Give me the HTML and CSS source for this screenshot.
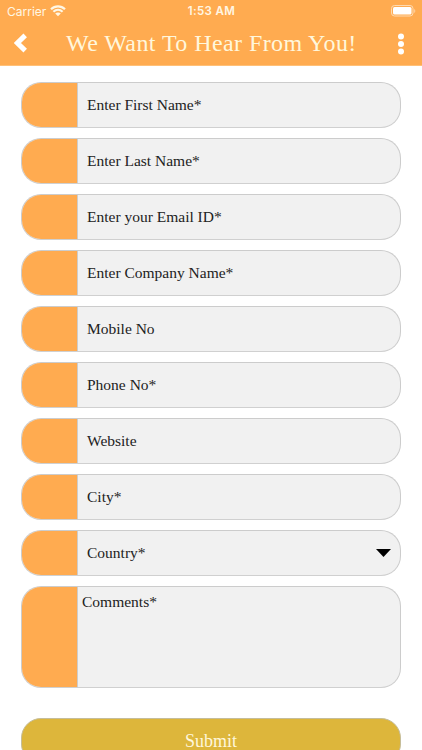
FILE: index.html
```
<!DOCTYPE html>
<html lang="en">
<head>
    <meta charset="UTF-8">
    <meta name="viewport" content="width=device-width, initial-scale=1.0">
    <title>We Want To Hear From You!</title>
    <link rel="stylesheet" href="styles.css">
</head>
<body>

    <header class="header">
        <div class="status-bar">
            <div class="carrier">
                <span>Carrier</span>
                <svg class="wifi" viewBox="0 0 16 12" width="16" height="12">
                    <path d="M1 4.200C5 .3 11 .3 15 4.200M3.400 6.800c2.700-2.500 6.500-2.500 9.200 0" fill="none" stroke="#fff7e4" stroke-width="2.200"/>
                    <path d="M5.200 8.500c1.600-1.400 4-1.400 5.600 0L8 11.300z" fill="#fff7e4"/>
                </svg>
            </div>
            <div class="time">1:53 AM</div>
            <svg class="battery" viewBox="0 0 25 12" width="25" height="12">
                <rect x=".5" y=".5" width="21.500" height="10.500" rx="3" fill="none" stroke="#ffdab0"/>
                <rect x="2" y="2" width="18.500" height="7.500" rx="1.500" fill="#fff"/>
                <path d="M23.300 4v4c1.300-.5 1.300-3.500 0-4z" fill="#ffdab0"/>
            </svg>
        </div>
        <div class="nav-bar">
            <svg class="back" viewBox="0 0 14 20" width="14" height="20">
                <path d="M11.200 2.400L3.400 10l7.800 7.600" fill="none" stroke="#fff" stroke-width="5"/>
            </svg>
            <h1 class="title">We Want To Hear From You!</h1>
            <svg class="more" viewBox="0 0 6 22" width="6" height="22">
                <circle cx="3" cy="3.500" r="3" fill="#fff"/>
                <circle cx="3" cy="11" r="3" fill="#fff"/>
                <circle cx="3" cy="18.500" r="3" fill="#fff"/>
            </svg>
        </div>
    </header>

    <main class="form">
        <div class="field"><div class="icon-box"></div><span class="label">Enter First Name*</span></div>
        <div class="field"><div class="icon-box"></div><span class="label">Enter Last Name*</span></div>
        <div class="field"><div class="icon-box"></div><span class="label">Enter your Email ID*</span></div>
        <div class="field"><div class="icon-box"></div><span class="label">Enter Company Name*</span></div>
        <div class="field"><div class="icon-box"></div><span class="label">Mobile No</span></div>
        <div class="field"><div class="icon-box"></div><span class="label">Phone No*</span></div>
        <div class="field"><div class="icon-box"></div><span class="label">Website</span></div>
        <div class="field"><div class="icon-box"></div><span class="label">City*</span></div>
        <div class="field">
            <div class="icon-box"></div>
            <span class="label">Country*</span>
            <svg class="arrow" viewBox="0 0 15 8" width="15" height="8">
                <path d="M0 0h15L7.500 8z" fill="#000"/>
            </svg>
        </div>
        <div class="field comments"><div class="icon-box"></div><span class="label">Comments*</span></div>
        <button class="submit">Submit</button>
    </main>

</body>
</html>
```
FILE: styles.css
```
* {
    box-sizing: border-box;
}
body {
    margin: 0;
    height: 750px;
    overflow: hidden;
    background: #fff;
    font-family: Georgia, "Liberation Serif", serif;
}
.header {
    height: 66px;
    background: #ffab50;
    border-bottom: 1px solid #ffc078;
}
.status-bar {
    display: grid;
    grid-template-columns: 1fr auto 1fr;
    align-items: center;
    height: 22px;
    padding: 0 6px 0 7px;
    font-family: Inter, "Liberation Sans", sans-serif;
    font-size: 12px;
    color: #fff7e4;
}
.carrier {
    display: flex;
    align-items: center;
    gap: 4px;
}
.time {
    font-size: 11.5px;
    font-weight: 600;
    letter-spacing: 0.4px;
}
.battery {
    justify-self: end;
}
.nav-bar {
    display: flex;
    align-items: center;
    height: 43px;
    padding: 0 18px 0 14px;
}
.back {
    margin-top: -2px;
}
.title {
    margin: 0 0 0 38px;
    font-size: 24px;
    font-weight: normal;
    letter-spacing: 0.42px;
    white-space: nowrap;
    color: #fff7dc;
}
.more {
    margin-left: auto;
}
.form {
    display: flex;
    flex-direction: column;
    gap: 10px;
    padding: 16px 21px 0;
}
.field {
    display: flex;
    align-items: center;
    flex-shrink: 0;
    height: 46px;
    border: 1px solid #ccc;
    border-bottom-color: #d0d0d0;
    border-radius: 20px;
    background: #f1f1f1;
    overflow: hidden;
}
.icon-box {
    align-self: stretch;
    width: 56px;
    border-right: 1px solid #ccc;
    background: #ffab50;
}
.label {
    padding-left: 9px;
    font-size: 15.5px;
    line-height: 18px;
    color: #222;
}
.arrow {
    margin-left: auto;
    margin-right: 9px;
}
.comments {
    align-items: flex-start;
    height: 102px;
}
.comments .label {
    padding: 6px 0 0 4px;
}
.submit {
    flex-shrink: 0;
    height: 46px;
    margin-top: 20px;
    padding: 0;
    border: 1px solid #c5bd9a;
    border-radius: 20px;
    background: #ddb63b;
    font-family: inherit;
    font-size: 18px;
    color: #fff7dc;
}
```
